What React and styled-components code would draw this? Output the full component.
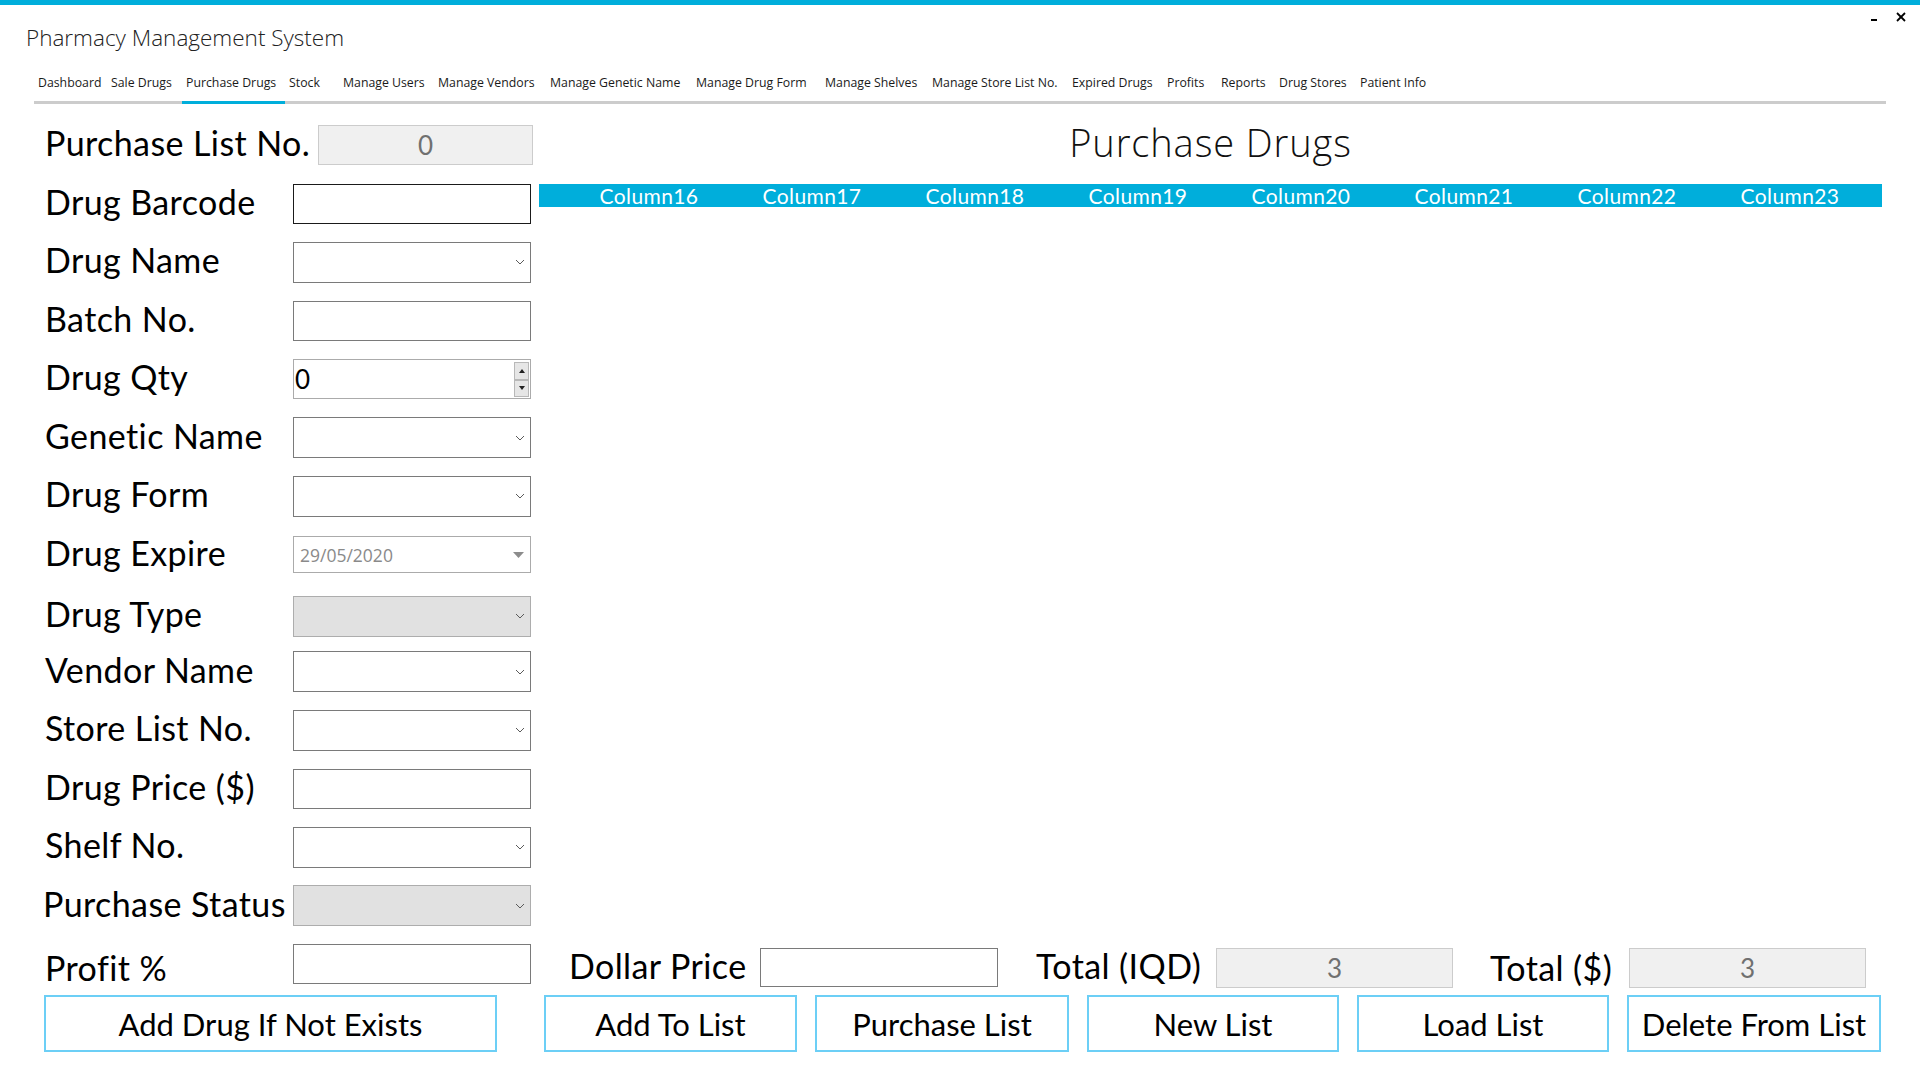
import React from "react";
import styled, { createGlobalStyle } from "styled-components";

const Global = createGlobalStyle`
  html, body { margin: 0; padding: 0; background: #fff; }
  body { font-family: "Lato", "Open Sans", sans-serif; color: #000; }
  * { box-sizing: border-box; }
`;

const BLUE = "#00aedb";

const Page = styled.div`
  width: 1920px;
  height: 1080px;
  background: #fff;
  overflow: hidden;
`;

const TopBar = styled.div`
  height: 5px;
  background: ${BLUE};
`;

const Header = styled.div`
  display: flex;
  align-items: flex-start;
  justify-content: space-between;
  padding-left: 26px;
  padding-right: 12px;
  height: 48px;
`;

const Title = styled.div`
  margin-top: 18px;
  font-family: "Open Sans", sans-serif;
  font-weight: 300;
  font-size: 22.5px;
  line-height: 30px;
  color: #222;
`;

const WindowControls = styled.div`
  display: flex;
  gap: 13px;
  margin-top: 5px;
`;

const CtrlBtn = styled.div`
  width: 14px;
  height: 14px;
  display: flex;
  align-items: center;
  justify-content: center;
`;

const TabStrip = styled.div`
  display: flex;
  margin: 17px 34px 0 34px;
  border-bottom: 3px solid #cccccc;
  height: 34px;
`;

const Tab = styled.div`
  height: 34px;
  margin-bottom: -3px;
  padding: 5px 0 0 4px;
  border-bottom: 3px solid ${(p) => (p.$active ? BLUE : "transparent")};
  font-family: "Open Sans", sans-serif;
  font-size: 12.3px;
  line-height: 16px;
  color: #1a1a1a;
  white-space: nowrap;
  flex: none;
`;

const Main = styled.div`
  display: flex;
  padding-left: 45px;
`;

const Form = styled.div`
  width: 488px;
  display: flex;
  flex-direction: column;
  gap: 18.5px;
  padding-top: 21px;
`;

const Row = styled.div`
  display: flex;
  align-items: center;
  height: 40px;
  margin-top: ${(p) => p.$shift || 0}px;
`;

const Label = styled.div`
  width: ${(p) => p.$w || 248}px;
  margin-left: ${(p) => p.$ml || 0}px;
  margin-top: ${(p) => p.$mt || 0}px;
  padding-bottom: 4px;
  font-family: "Lato", sans-serif;
  font-size: 34px;
  letter-spacing: 0.4px;
  line-height: 40px;
  white-space: nowrap;
  flex: none;
`;

const TextBox = styled.div`
  width: ${(p) => p.$w || 238}px;
  height: ${(p) => p.$h || 40}px;
  border: 1px solid ${(p) => (p.$dark ? "#1a1a1a" : "#7a7a7a")};
  background: #fff;
  flex: none;
  margin-top: ${(p) => p.$mt || 0}px;
`;

const ReadOnlyBox = styled.div`
  width: ${(p) => p.$w || 238}px;
  height: 40px;
  border: 1px solid #cccccc;
  background: #f0f0f0;
  display: flex;
  align-items: center;
  justify-content: center;
  font-family: "Lato", sans-serif;
  font-size: 26px;
  color: #707070;
  flex: none;
  margin-top: ${(p) => p.$mt || 0}px;
`;

const ComboBox = styled.div`
  position: relative;
  width: 238px;
  height: 41px;
  border: 1px solid ${(p) => (p.$disabled ? "#adadad" : "#7a7a7a")};
  background: ${(p) => (p.$disabled ? "#e1e1e1" : "#fff")};
  flex: none;
`;

const Chevron = styled.svg`
  position: absolute;
  right: 4px;
  top: 50%;
  margin-top: -3px;
`;

const Spin = styled.div`
  position: relative;
  width: 238px;
  height: 40px;
  border: 1px solid #ababab;
  background: #fff;
  display: flex;
  align-items: center;
  padding-left: 1px;
  font-family: "Lato", sans-serif;
  font-size: 26px;
  flex: none;
`;

const SpinButtons = styled.div`
  position: absolute;
  right: 1px;
  top: 2px;
  bottom: 1px;
  width: 15px;
  display: flex;
  flex-direction: column;
`;

const SpinBtn = styled.div`
  flex: 1;
  background: #e6e6e6;
  border: 1px solid #b8b8b8;
  display: flex;
  align-items: center;
  justify-content: center;
`;

const DateBox = styled.div`
  position: relative;
  width: 238px;
  height: 37px;
  border: 1px solid #ababab;
  background: #fff;
  display: flex;
  align-items: center;
  padding-left: 6px;
  font-family: "Open Sans", sans-serif;
  font-size: 17.5px;
  color: #8a8a8a;
  flex: none;
`;

const DateArrow = styled.svg`
  position: absolute;
  right: 6px;
  top: 15px;
`;

const RightPanel = styled.div`
  margin-left: 6px;
  width: 1343px;
  display: flex;
  flex-direction: column;
`;

const Heading = styled.div`
  margin-top: 14px;
  height: 48px;
  text-align: center;
  font-family: "Open Sans", sans-serif;
  font-weight: 300;
  font-size: 38px;
  line-height: 48px;
  letter-spacing: 0.9px;
  color: #111;
`;

const GridHeader = styled.div`
  margin-top: 18px;
  height: 23px;
  background: ${BLUE};
  display: flex;
  padding-left: 28.5px;
`;

const ColHead = styled.div`
  width: 163px;
  flex: none;
  text-align: center;
  color: #fff;
  font-family: "Lato", sans-serif;
  font-size: 21px;
  letter-spacing: 0.4px;
  line-height: 23px;
`;

const BottomRow = styled.div`
  display: flex;
  align-items: flex-start;
  padding-left: 45px;
  margin-top: 18.5px;
  height: 43px;
`;

const ButtonRow = styled.div`
  display: flex;
  padding-left: 44px;
  margin-top: 8px;
`;

const Button = styled.button`
  width: ${(p) => p.$w || 253}px;
  height: 57px;
  margin-left: ${(p) => p.$ml ?? 18}px;
  border: 2px solid #6ccff6;
  background: #fff;
  font-family: "Lato", sans-serif;
  font-size: 31px;
  color: #000;
  padding: 0;
  flex: none;
`;

const tabs = [
  ["Dashboard", 73],
  ["Sale Drugs", 75],
  ["Purchase Drugs", 103, true],
  ["Stock", 54],
  ["Manage Users", 95],
  ["Manage Vendors", 112],
  ["Manage Genetic Name", 146],
  ["Manage Drug Form", 129],
  ["Manage Shelves", 107],
  ["Manage Store List No.", 140],
  ["Expired Drugs", 95],
  ["Profits", 54],
  ["Reports", 58],
  ["Drug Stores", 81],
  ["Patient Info", 80],
];

const ChevronIcon = () => (
  <Chevron width="12" height="6" viewBox="0 0 12 6">
    <polyline points="2,1 6,5 10,1" fill="none" stroke="#5a5a5a" strokeWidth="1" />
  </Chevron>
);

const Combo = ({ disabled }) => (
  <ComboBox $disabled={disabled}>
    <ChevronIcon />
  </ComboBox>
);

const formRows = [
  { label: "Purchase List No.", kind: "readonly", value: "0", lw: 273, w: 215 },
  { label: "Drug Barcode", kind: "dark" },
  { label: "Drug Name", kind: "combo" },
  { label: "Batch No.", kind: "text" },
  { label: "Drug Qty", kind: "spin" },
  { label: "Genetic Name", kind: "combo" },
  { label: "Drug Form", kind: "combo" },
  { label: "Drug Expire", kind: "date" },
  { label: "Drug Type", kind: "combo", disabled: true, shift: 3 },
  { label: "Vendor Name", kind: "combo", shift: -3 },
  { label: "Store List No.", kind: "combo" },
  { label: "Drug Price ($)", kind: "text" },
  { label: "Shelf No.", kind: "combo" },
  { label: "Purchase Status", kind: "combo", disabled: true, ml: -2, lw: 250 },
];

const Control = ({ row }) => {
  switch (row.kind) {
    case "readonly":
      return <ReadOnlyBox $w={row.w}>{row.value}</ReadOnlyBox>;
    case "dark":
      return <TextBox $dark />;
    case "text":
      return <TextBox />;
    case "combo":
      return <Combo disabled={row.disabled} />;
    case "spin":
      return (
        <Spin>
          0
          <SpinButtons>
            <SpinBtn>
              <svg width="6" height="4" viewBox="0 0 6 4">
                <polygon points="0,4 6,4 3,0" fill="#222" />
              </svg>
            </SpinBtn>
            <SpinBtn>
              <svg width="6" height="4" viewBox="0 0 6 4">
                <polygon points="0,0 6,0 3,4" fill="#222" />
              </svg>
            </SpinBtn>
          </SpinButtons>
        </Spin>
      );
    case "date":
      return (
        <DateBox>
          29/05/2020
          <DateArrow width="11" height="6" viewBox="0 0 11 6">
            <polygon points="0,0 11,0 5.5,6" fill="#8c8c8c" />
          </DateArrow>
        </DateBox>
      );
    default:
      return null;
  }
};

const columns = ["Column16", "Column17", "Column18", "Column19", "Column20", "Column21", "Column22", "Column23"];

export default function App() {
  return (
    <Page>
      <Global />
      <TopBar />
      <Header>
        <Title>Pharmacy Management System</Title>
        <WindowControls>
          <CtrlBtn>
            <svg width="10" height="14" viewBox="0 0 10 14">
              <line x1="2" y1="10" x2="8" y2="10" stroke="#000" strokeWidth="2" />
            </svg>
          </CtrlBtn>
          <CtrlBtn>
            <svg width="12" height="12" viewBox="0 0 12 12">
              <line x1="2" y1="2" x2="10" y2="10" stroke="#000" strokeWidth="1.8" />
              <line x1="10" y1="2" x2="2" y2="10" stroke="#000" strokeWidth="1.8" />
            </svg>
          </CtrlBtn>
        </WindowControls>
      </Header>
      <TabStrip>
        {tabs.map(([name, w, active]) => (
          <Tab key={name} $active={active} style={{ width: w }}>
            {name}
          </Tab>
        ))}
      </TabStrip>
      <Main>
        <Form>
          {formRows.map((row) => (
            <Row key={row.label} $shift={row.shift}>
              <Label $w={row.lw} $ml={row.ml}>{row.label}</Label>
              <Control row={row} />
            </Row>
          ))}
        </Form>
        <RightPanel>
          <Heading>Purchase Drugs</Heading>
          <GridHeader>
            {columns.map((c) => (
              <ColHead key={c}>{c}</ColHead>
            ))}
          </GridHeader>
        </RightPanel>
      </Main>
      <BottomRow>
        <Label $w={248} $mt={4}>Profit %</Label>
        <TextBox $h={40} />
        <Label $w={191} $ml={38} $mt={2}>Dollar Price</Label>
        <TextBox $mt={4} $h={39} />
        <Label $w={180} $ml={38} $mt={2}>Total (IQD)</Label>
        <ReadOnlyBox $w={237} $mt={4}>3</ReadOnlyBox>
        <Label $w={139} $ml={37} $mt={4}>Total ($)</Label>
        <ReadOnlyBox $w={237} $mt={4}>3</ReadOnlyBox>
      </BottomRow>
      <ButtonRow>
        <Button $w={453} $ml={0}>Add Drug If Not Exists</Button>
        <Button $ml={47}>Add To List</Button>
        <Button $w={254}>Purchase List</Button>
        <Button $w={252}>New List</Button>
        <Button $w={252}>Load List</Button>
        <Button $w={254}>Delete From List</Button>
      </ButtonRow>
    </Page>
  );
}
